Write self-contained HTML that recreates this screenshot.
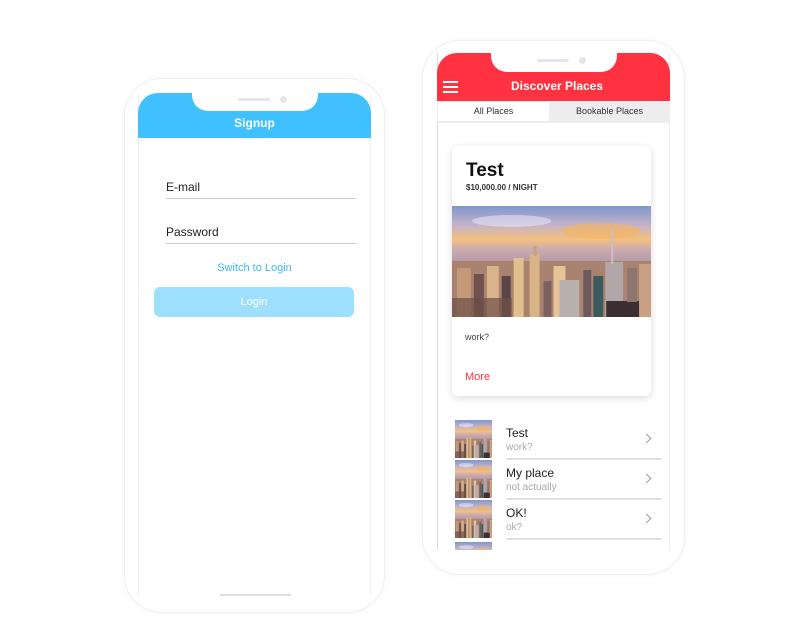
<!DOCTYPE html>
<html><head><meta charset="utf-8"><style>
*{margin:0;padding:0;box-sizing:border-box}
body{width:794px;height:643px;background:#fff;position:relative;overflow:hidden;font-family:"Liberation Sans",Arial,sans-serif}
.a{position:absolute}
.frame{position:absolute;border:1px solid #f0f0f2;border-radius:38px;box-shadow:0 0 8px rgba(0,0,0,0.04)}
.li{position:absolute;left:455px;width:207px;height:40px}
.li svg{position:absolute;left:0;top:0;width:37px;height:38px}
.li .t{position:absolute;left:51px;top:6px;font-size:12px;color:#222}
.li .s{position:absolute;left:51px;top:22px;font-size:10px;color:#aaa}
.li .ln{position:absolute;left:51px;right:0;bottom:0;height:2px;background:#e2e2e2}
.li .ch{position:absolute;right:12px;top:15px;width:7px;height:7px;border-right:1.3px solid #999;border-top:1.3px solid #999;transform:rotate(45deg)}
</style></head><body>
<svg width="0" height="0" style="position:absolute">
<defs>
<linearGradient id="sky" x1="0" y1="0" x2="0" y2="1">
<stop offset="0" stop-color="#7f97cf"/><stop offset="0.18" stop-color="#c7b3c6"/><stop offset="0.3" stop-color="#f3c07e"/><stop offset="0.4" stop-color="#c9a9b3"/><stop offset="0.5" stop-color="#b49ba6"/><stop offset="1" stop-color="#9a7a70"/>
</linearGradient>
<symbol id="city" viewBox="0 0 200 111" preserveAspectRatio="none">
<rect width="200" height="111" fill="url(#sky)"/>
<ellipse cx="150" cy="25" rx="40" ry="8" fill="#f6b45a" opacity=".6"/>
<ellipse cx="60" cy="15" rx="40" ry="6" fill="#eef" opacity=".5"/>
<rect x="0" y="55" width="200" height="56" fill="#a98270"/>
<rect x="5" y="62" width="14" height="49" fill="#c49a7a"/>
<rect x="22" y="68" width="10" height="43" fill="#6d5250"/>
<rect x="35" y="60" width="12" height="51" fill="#d9b48a"/>
<rect x="50" y="70" width="9" height="41" fill="#5a4648"/>
<rect x="62" y="52" width="10" height="59" fill="#e2c08e"/>
<rect x="78" y="48" width="10" height="63" fill="#d8b487"/>
<rect x="82" y="40" width="3" height="10" fill="#c9a07a"/>
<rect x="92" y="75" width="8" height="36" fill="#7b6160"/>
<rect x="102" y="60" width="12" height="51" fill="#e6c497"/>
<rect x="108" y="74" width="20" height="37" fill="#b8b0ad"/>
<rect x="132" y="64" width="8" height="47" fill="#6c5a5c"/>
<rect x="142" y="70" width="10" height="41" fill="#3e5a5e"/>
<rect x="154" y="56" width="18" height="55" fill="#b1a7a8"/>
<rect x="160" y="24" width="2" height="34" fill="#c7c0c6"/>
<rect x="155" y="95" width="40" height="16" fill="#3a2e32"/>
<rect x="176" y="62" width="10" height="34" fill="#8e7670"/>
<rect x="188" y="58" width="12" height="53" fill="#c9a084"/>
<rect x="0" y="92" width="60" height="19" fill="#6e4e46" opacity=".7"/>
</symbol>
</defs></svg>
<!-- left phone -->
<div class="frame" style="left:124px;top:78px;width:261px;height:535px"></div>
<div class="a" style="left:138px;top:93px;width:233px;height:502px;background:#fff;border-left:1px solid #eee;border-right:1px solid #f0f0f0"></div>
<div class="a" style="left:138px;top:93px;width:233px;height:45px;background:#40c1fe;border-radius:20px 20px 0 0"></div>
<div class="a" style="left:192px;top:86px;width:126px;height:25px;background:#fff;border-radius:0 0 16px 16px"></div>
<div class="a" style="left:238px;top:98px;width:32px;height:3px;background:#e4e4ea;border-radius:2px"></div>
<div class="a" style="left:280px;top:96px;width:7px;height:7px;background:#e4e4ea;border-radius:50%"></div>
<div class="a" style="left:138px;top:116px;width:233px;text-align:center;color:#fff;font-weight:bold;font-size:12px">Signup</div>
<div class="a" style="left:166px;top:180px;font-size:12px;color:#222">E-mail</div>
<div class="a" style="left:166px;top:198px;width:190px;height:1px;background:#ccc"></div>
<div class="a" style="left:166px;top:225px;font-size:12px;color:#222">Password</div>
<div class="a" style="left:166px;top:243px;width:190px;height:1px;background:#ccc"></div>
<div class="a" style="left:138px;top:262px;width:233px;text-align:center;font-size:11px;color:#3bb8f5">Switch to Login</div>
<div class="a" style="left:154px;top:287px;width:200px;height:30px;background:#9edffd;border-radius:6px;color:#fff;font-size:11px;text-align:center;line-height:30px">Login</div>
<div class="a" style="left:220px;top:594px;width:71px;height:2px;background:#ddd"></div>

<!-- right phone -->
<div class="frame" style="left:422px;top:40px;width:263px;height:535px"></div>
<div class="a" style="left:437px;top:53px;width:233px;height:497px;background:#fff;border-left:1px solid #ddd;border-right:1px solid #eee"></div>
<div class="a" style="left:437px;top:53px;width:233px;height:48px;background:#fe3240;border-radius:20px 20px 0 0"></div>
<div class="a" style="left:491px;top:47px;width:126px;height:25px;background:#fff;border-radius:0 0 16px 16px"></div>
<div class="a" style="left:537px;top:59px;width:32px;height:3px;background:#e4e4ea;border-radius:2px"></div>
<div class="a" style="left:579px;top:57px;width:7px;height:7px;background:#e4e4ea;border-radius:50%"></div>
<div class="a" style="left:443px;top:81px;width:15px;height:2px;background:#fff;box-shadow:0 5px 0 #fff,0 10px 0 #fff"></div>
<div class="a" style="left:437px;top:79px;width:240px;text-align:center;color:#fff;font-weight:bold;font-size:12px">Discover Places</div>
<div class="a" style="left:437px;top:101px;width:233px;height:22px;background:#ededed"></div>
<div class="a" style="left:438px;top:102px;width:111px;height:19px;background:#fff;border-radius:0 0 3px 0;font-size:9px;text-align:center;line-height:19px;color:#333">All Places</div>
<div class="a" style="left:552px;top:102px;width:115px;height:19px;font-size:9px;text-align:center;line-height:19px;color:#333">Bookable Places</div>
<div class="a" style="left:452px;top:146px;width:199px;height:250px;background:#fff;border-radius:6px;box-shadow:0 2px 8px rgba(0,0,0,0.14)"></div>
<div class="a" style="left:466px;top:160px;font-size:19px;font-weight:bold;color:#111">Test</div>
<div class="a" style="left:466px;top:183px;font-size:8px;font-weight:bold;color:#333">$10,000.00 / NIGHT</div>
<svg class="a" style="left:452px;top:206px" width="199" height="111"><use href="#city"/></svg>
<div class="a" style="left:465px;top:332px;font-size:9px;color:#444">work?</div>
<div class="a" style="left:465px;top:371px;font-size:11px;color:#fe3240">More</div>

<div class="li" style="top:420px"><svg><use href="#city"/></svg><div class="t">Test</div><div class="s">work?</div><div class="ch"></div><div class="ln"></div></div>
<div class="li" style="top:460px"><svg><use href="#city"/></svg><div class="t">My place</div><div class="s">not actually</div><div class="ch"></div><div class="ln"></div></div>
<div class="li" style="top:500px"><svg><use href="#city"/></svg><div class="t">OK!</div><div class="s">ok?</div><div class="ch"></div><div class="ln"></div></div>
<svg class="a" style="left:455px;top:542px" width="37" height="8" preserveAspectRatio="none"><use href="#city" width="37" height="38"/></svg>
</body></html>
